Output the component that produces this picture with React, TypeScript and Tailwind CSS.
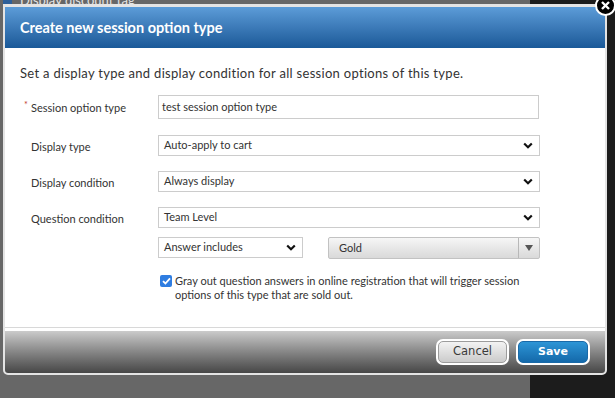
import React from 'react';

const font = { fontFamily: 'Lato, "Open Sans", sans-serif' };

const Chevron = () => (
  <svg width="10" height="7" viewBox="0 0 10 7" className="shrink-0">
    <path d="M1.2 1.5 L5 5.2 L8.8 1.5" fill="none" stroke="#111" strokeWidth="2.2" />
  </svg>
);

const Select = ({ value, className = '' }: { value: string; className?: string }) => (
  <div
    className={`flex h-[21px] items-center justify-between border border-[#cccccc] bg-white pl-[5px] pr-[6px] text-[11px] text-[#333] ${className}`}
  >
    <span>{value}</span>
    <Chevron />
  </div>
);

const Row = ({ label, required, children }: { label: string; required?: boolean; children: React.ReactNode }) => (
  <div className="flex items-center">
    <div className="relative w-[138px] pl-[11px] pt-[3px] text-[11px] text-[#333]">
      {required && <span className="absolute left-[4px] top-[1px] text-[9px] text-[#c0392b]">*</span>}
      {label}
    </div>
    {children}
  </div>
);

export default function App() {
  return (
    <div className="relative h-[398px] w-[615px] overflow-hidden" style={font}>
      {/* page behind the modal */}
      <div className="grid h-full grid-cols-[530px_85px]">
        <div className="bg-[#676767]">
          <div className="-mt-[7px] flex items-center gap-[8px] pl-[3px]">
            <div className="h-[10px] w-[9px] bg-[#2d5f99]" />
            <span className="text-[13px] leading-[14px] text-[#e4e4e4]">Display discount tag</span>
          </div>
        </div>
        <div className="bg-[#1c1c1c]" />
      </div>

      {/* modal */}
      <div className="absolute left-[3px] top-[4px] flex h-[371px] w-[604px] flex-col rounded-b-[5px] border-[2px] border-t-[3px] border-[#e4e4e4] bg-white">
        <div className="flex h-[41px] shrink-0 items-center bg-gradient-to-b from-[#5c9cd8] to-[#1a5998] pl-[15px] text-[14.5px] font-bold text-white">
          Create new session option type
        </div>

        <div className="flex h-[280px] flex-col border-b border-[#d8d8d8] pl-[15px] pt-[17px]">
          <p className="text-[13px] leading-[16px] tracking-[0.3px] text-[#333]">
            Set a display type and display condition for all session options of this type.
          </p>

          <div className="mt-[14px] flex flex-col">
            <Row label="Session option type" required>
              <div className="flex h-[24px] w-[381px] items-center border border-[#cccccc] pl-[3px] text-[11px] text-[#333]">
                test session option type
              </div>
            </Row>
            <div className="mt-[16px]">
              <Row label="Display type">
                <Select value="Auto-apply to cart" className="w-[382px]" />
              </Row>
            </div>
            <div className="mt-[15px]">
              <Row label="Display condition">
                <Select value="Always display" className="w-[382px]" />
              </Row>
            </div>
            <div className="mt-[15px]">
              <Row label="Question condition">
                <Select value="Team Level" className="w-[382px]" />
              </Row>
            </div>
            <div className="mt-[9px] flex pl-[138px]">
              <Select value="Answer includes" className="w-[145px]" />
              <div className="ml-[25px] flex h-[22px] w-[212px] items-center rounded-[2px] border border-[#c2c2c2] bg-gradient-to-b from-[#f6f6f6] to-[#d9d9d9] text-[11px] text-[#333]">
                <span className="flex-1 pl-[10px]">Gold</span>
                <div className="flex h-full w-[21px] items-center justify-center border-l border-[#b8b8b8]">
                  <svg width="8" height="6" viewBox="0 0 8 6">
                    <path d="M0 0 H8 L4 6 Z" fill="#555" />
                  </svg>
                </div>
              </div>
            </div>
            <div className="mt-[15px] flex gap-[3px] pl-[140px]">
              <div className="mt-[1px] flex h-[12px] w-[12px] shrink-0 items-center justify-center rounded-[2px] bg-[#2f7de1]">
                <svg width="9" height="8" viewBox="0 0 9 8">
                  <path d="M1 4.2 L3.4 6.5 L8 1.3" fill="none" stroke="#fff" strokeWidth="1.8" />
                </svg>
              </div>
              <p className="w-[350px] text-[11px] leading-[14px] text-[#333]">
                Gray out question answers in online registration that will trigger session options of this type that are sold out.
              </p>
            </div>
          </div>
        </div>

        <div className="mt-[3px] flex flex-1 items-center justify-end gap-[7px] rounded-b-[3px] bg-gradient-to-b from-[#cbcbcb] to-[#474747] pr-[15px]">
          <button className="h-[26px] w-[73px] rounded-[7px] bg-white p-[2px]">
            <div
              className="flex h-full items-center justify-center rounded-[5px] border border-[#9c9c9c] bg-gradient-to-b from-[#f3f3f3] to-[#cbcbcb] text-[#3a3a3a]"
              style={{ fontFamily: '"DejaVu Sans", sans-serif', fontSize: 11.5 }}
            >
              Cancel
            </div>
          </button>
          <button className="h-[26px] w-[74px] rounded-[7px] bg-white p-[2px]">
            <div
              className="flex h-full items-center justify-center rounded-[5px] border border-[#1a6aa8] bg-gradient-to-b from-[#2d95d6] to-[#1469aa] font-bold text-white"
              style={{ fontFamily: '"DejaVu Sans", sans-serif', fontSize: 11 }}
            >
              Save
            </div>
          </button>
        </div>
      </div>

      {/* close button */}
      <div className="absolute left-[595px] top-[-5px] flex h-[21px] w-[21px] items-center justify-center rounded-full border-[2px] border-white bg-black">
        <svg width="9" height="9" viewBox="0 0 9 9">
          <path d="M1 1 L8 8 M8 1 L1 8" stroke="#fff" strokeWidth="2.4" />
        </svg>
      </div>
    </div>
  );
}
